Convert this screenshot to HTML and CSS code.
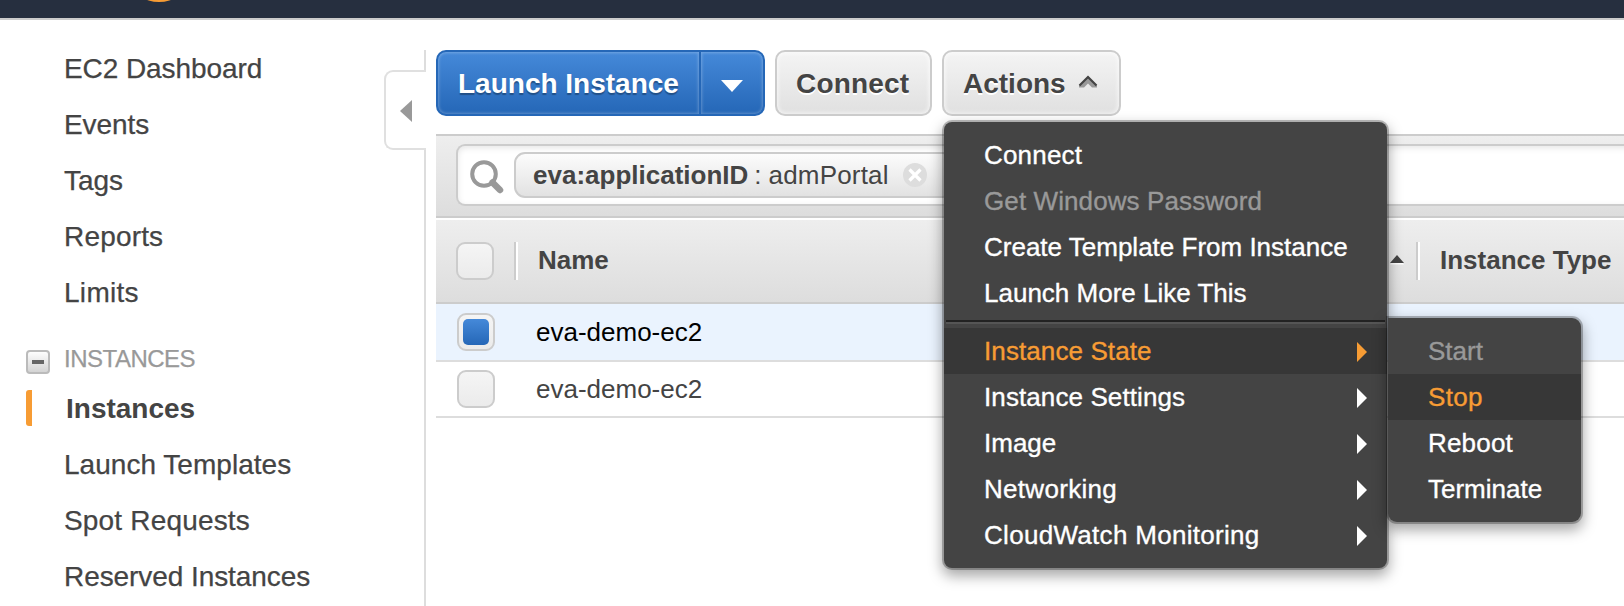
FILE: index.html
```
<!DOCTYPE html>
<html lang="en">
<head>
<meta charset="utf-8">
<title>EC2 Instances</title>
<link rel="stylesheet" href="styles.css">
</head>
<body>
<header class="topbar"><span class="logo-smile"></span></header>
<div class="page">
  <aside class="sidebar">
    <nav class="nav">
      <a class="nav-link"><span class="t">EC2 Dashboard</span></a>
      <a class="nav-link"><span class="t">Events</span></a>
      <a class="nav-link"><span class="t">Tags</span></a>
      <a class="nav-link"><span class="t semi">Reports</span></a>
      <a class="nav-link"><span class="t wide">Limits</span></a>
      <div class="nav-group"><span class="collapse"></span><span class="t">INSTANCES</span></div>
      <a class="nav-link current"><span class="t">Instances</span></a>
      <a class="nav-link"><span class="t level">Launch Templates</span></a>
      <a class="nav-link"><span class="t semi">Spot Requests</span></a>
      <a class="nav-link"><span class="t">Reserved Instances</span></a>
    </nav>
    <div class="rail">
      <div class="rail-line top"></div>
      <div class="rail-toggle"><svg width="12" height="24" viewBox="0 0 12 24"><path d="M12 1v22L0 12z" fill="#999"/></svg></div>
      <div class="rail-line rest"></div>
    </div>
  </aside>
  <main class="main">
    <div class="buttons">
      <div class="split">
        <div class="btn primary launch"><span class="t">Launch Instance</span></div>
        <div class="btn primary caret"><svg width="22" height="12" viewBox="0 0 22 12"><path d="M0 0h22L11 12z" fill="#fff"/></svg></div>
      </div>
      <div class="btn plain connect"><span class="t semi">Connect</span></div>
      <div class="btn plain actions"><span class="t">Actions</span><svg class="chev" width="20" height="14" viewBox="0 0 20 14"><path d="M1 10.500L10 1.500L19 10.500V12.500H14L10 8.500L6 12.500H1z" fill="#999"/><path d="M1.500 10.500L10 2L18.500 10.500" fill="none" stroke="#444" stroke-width="2.200"/></svg></div>
    </div>
    <div class="filter">
      <div class="search">
        <svg class="lens" width="36" height="36" viewBox="0 0 36 36"><circle cx="15" cy="15" r="11.800" fill="none" stroke="#999" stroke-width="4"/><path d="M23.500 23.500L31 31" stroke="#999" stroke-width="6.500" stroke-linecap="round"/></svg>
        <div class="token"><b class="t">eva:applicationID</b><span class="colon">:</span><span class="t semi">admPortal</span>
          <svg class="clear" width="24" height="24" viewBox="0 0 24 24"><circle cx="12" cy="12" r="12" fill="#ddd"/><path d="M6.500 6.500l11 11M17.500 6.500l-11 11" stroke="#fff" stroke-width="3.200"/></svg>
        </div>
      </div>
    </div>
    <div class="thead">
      <span class="check"></span><span class="sep first"></span><span class="t th">Name</span>
      <svg class="sort" width="14" height="10" viewBox="0 0 14 10"><path d="M0 9.500L7 1.500L14 9.500z" fill="#fff"/><path d="M0 8L7 0L14 8z" fill="#444"/></svg>
      <span class="sep second"></span><span class="t th">Instance Type</span>
    </div>
    <div class="row selected"><span class="check"><span class="tick"></span></span><span class="t">eva-demo-ec2</span></div>
    <div class="row"><span class="check"></span><span class="t">eva-demo-ec2</span></div>
  </main>
</div>
<div class="menu">
  <div class="item"><span class="t semi">Connect</span></div>
  <div class="item off"><span class="t slight">Get Windows Password</span></div>
  <div class="item"><span class="t">Create Template From Instance</span></div>
  <div class="item"><span class="t">Launch More Like This</span></div>
  <div class="divider"></div>
  <div class="item hot"><span class="t slight">Instance State</span><i class="arrow"></i></div>
  <div class="item"><span class="t slight">Instance Settings</span><i class="arrow"></i></div>
  <div class="item"><span class="t">Image</span><i class="arrow"></i></div>
  <div class="item"><span class="t wide">Networking</span><i class="arrow"></i></div>
  <div class="item"><span class="t wide">CloudWatch Monitoring</span><i class="arrow"></i></div>
</div>
<div class="menu submenu">
  <div class="item off"><span class="t">Start</span></div>
  <div class="item hot"><span class="t wide">Stop</span></div>
  <div class="item"><span class="t semi">Reboot</span></div>
  <div class="item"><span class="t">Terminate</span></div>
</div>
</body>
</html>
```
FILE: styles.css
```
* { box-sizing: border-box; }
body { margin: 0; width: 1624px; height: 606px; overflow: hidden; background: #fff; color: #444; font-family: "Liberation Sans", Arial, sans-serif; font-size: 26px; position: relative; }
svg { display: block; flex: none; }
.t { white-space: nowrap; }
.level { letter-spacing: .03px; }
.slight { letter-spacing: .1px; }
.semi { letter-spacing: .18px; }
.wide { letter-spacing: .3px; }
.topbar { height: 20px; background: #262f3f; border-bottom: 2px solid #ccc; position: relative; overflow: hidden; }
.logo-smile { position: absolute; left: 132px; top: -38px; width: 54px; height: 40px; border-radius: 50%; background: #f79c34; }
.page { display: flex; height: 586px; }
.sidebar { display: flex; width: 426px; flex: none; }
.nav { width: 384px; padding-top: 20px; font-size: 28px; letter-spacing: -.07px; -webkit-text-stroke: .25px; }
.nav-link { display: flex; align-items: center; height: 56px; padding: 2px 0 0 64px; }
.nav-group { display: flex; align-items: center; height: 60px; padding: 18px 0 0 26px; font-size: 24px; color: #999; letter-spacing: -.5px; }
.collapse { width: 24px; height: 24px; margin: 6px 14px 0 0; border: 2px solid #bbb; border-radius: 4px; background: linear-gradient(#666, #666) center/12px 4px no-repeat, linear-gradient(#fdfdfd, #d4d4d4); }
.current { font-weight: bold; position: relative; padding-left: 66px; letter-spacing: 0; -webkit-text-stroke: 0; }
.current::before { content: ""; position: absolute; left: 26px; top: 10px; width: 6px; height: 36px; background: #f79c34; border-radius: 3px 0 0 3px; }
.rail { display: flex; flex-direction: column; width: 42px; padding-top: 30px; }
.rail-line { width: 2px; background: #ddd; align-self: flex-end; }
.top { height: 20px; }
.rest { flex: 1; }
.rail-toggle { height: 80px; border: 2px solid #e0e0e0; border-right: 0; border-radius: 9px 0 0 9px; display: flex; align-items: center; padding: 2px 0 0 14px; }
.main { flex: 1; margin-left: 10px; padding-top: 30px; min-width: 0; }
.buttons { display: flex; gap: 10px; height: 84px; }
.split { display: flex; }
.btn { display: flex; align-items: center; height: 66px; font-size: 28px; font-weight: bold; border: 2px solid #ccc; border-radius: 10px; padding-top: 2px; }
.primary { color: #fff; border-color: #2567b7; background: linear-gradient(#4589d9, #2567b7); box-shadow: inset 0 0 3px 1px rgba(255,255,255,.25); text-shadow: 0 2px 1px rgba(0,0,0,.3); }
.launch { width: 265px; padding-left: 20px; border-radius: 10px 0 0 10px; }
.caret { width: 64px; border-left: 0; border-radius: 0 10px 10px 0; padding: 6px 0 0 20px; }
.plain { background: linear-gradient(#f4f4f4, #e0e0e0); box-shadow: inset 0 0 4px 1px rgba(255,255,255,.7); text-shadow: 0 2px 0 #fff; }
.connect { width: 157px; padding-left: 19px; }
.actions { width: 179px; padding-left: 19px; }
.chev { margin: -4px 0 0 12px; }
.filter { height: 84px; border-top: 2px solid #ccc; border-bottom: 2px solid #ccc; background: linear-gradient(#eee, #ddd); padding: 8px 0 0 20px; }
.search { height: 62px; margin-right: -12px; border: 2px solid #ccc; border-right: 0; border-radius: 9px 0 0 9px; background: #fff; box-shadow: inset 0 2px 6px rgba(0,0,0,.1); display: flex; padding: 6px 0 0 11px; }
.lens { margin: 7px 9px 0 0; }
.token { display: flex; align-items: center; height: 46px; width: 440px; border: 2px solid #ccc; border-radius: 11px; background: linear-gradient(#fcfcfc, #e2e2e2); padding-left: 17px; }
.colon { margin: 0 7px 0 6px; }
.clear { margin-left: 14px; }
.thead { display: flex; align-items: center; height: 86px; border-top: 2px solid #fff; border-bottom: 2px solid #ccc; background: linear-gradient(#eee, #ddd); padding-left: 20px; font-weight: bold; }
.check { flex: none; width: 38px; height: 38px; border: 2px solid #ccc; border-radius: 9px; background: linear-gradient(#f5f5f5, #ebebeb); padding: 4px; }
.tick { display: block; width: 26px; height: 26px; border-radius: 5px; background: linear-gradient(#4589d9, #2567b7); }
.sep { width: 4px; height: 38px; background: linear-gradient(90deg, #ccc 50%, #fff 50%); }
.first { margin: 0 20px 0 20px; }
.th { width: 70px; padding-bottom: 2px; }
.sort { margin: -2px 0 0 782px; }
.second { margin: 0 20px 0 12px; }
.row { display: flex; align-items: center; height: 56px; border-bottom: 2px solid #ddd; padding-left: 21px; }
.row .t { margin-left: 41px; }
.selected { height: 58px; background: #eaf3fe; color: #000; }
.menu { position: absolute; left: 944px; top: 122px; width: 443px; height: 446px; padding-top: 10px; background: #444; border-radius: 8px; color: #fff; box-shadow: 0 0 0 2px rgba(0,0,0,.25), 0 6px 14px 2px rgba(0,0,0,.35); -webkit-text-stroke: .35px; }
.item { display: flex; align-items: center; justify-content: space-between; height: 46px; padding: 0 20px 0 40px; }
.off { color: #999; }
.hot { color: #f79c34; background: #373737; }
.divider { height: 4px; margin: 4px 2px; border-top: 2px solid #222; border-bottom: 2px solid #555; }
.arrow { border-left: 10px solid currentColor; border-top: 10px solid transparent; border-bottom: 10px solid transparent; margin-top: 2px; }
.submenu { left: 1388px; top: 318px; width: 193px; height: 204px; border-radius: 0 9px 9px 9px; }
```
